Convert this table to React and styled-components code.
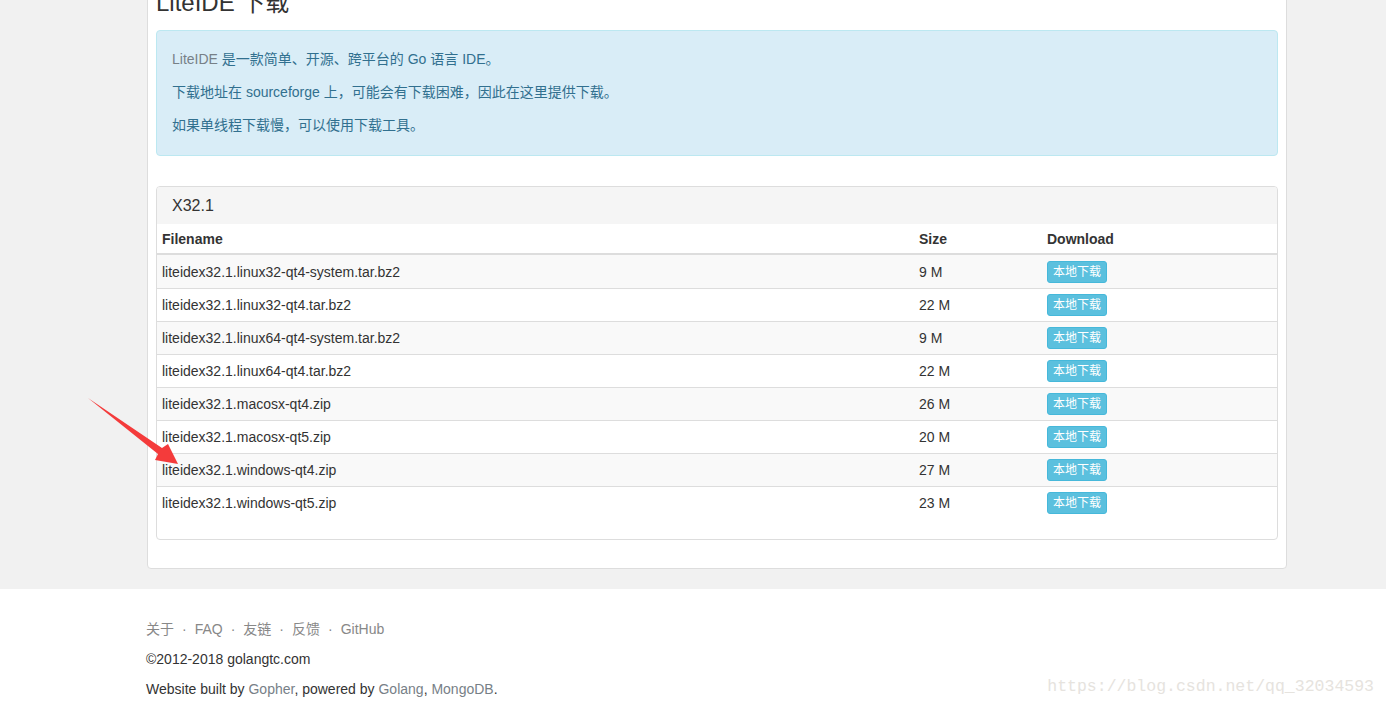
import styled, { createGlobalStyle } from 'styled-components'

const GlobalStyle = createGlobalStyle`
  body {
    margin: 0;
    background: #f1f1f1;
    font-family: "Liberation Sans", Arial, "Noto Sans CJK SC", sans-serif;
    font-size: 14px;
    color: #333;
    overflow: hidden;
  }
`

const Page = styled.div`
  position: relative;
  width: 1386px;
  height: 706px;
  overflow: hidden;
`

const Main = styled.section`
  padding-bottom: 20px;
`

const Box = styled.div`
  width: 1122px;
  margin: -20px 0 0 147px;
  padding: 9px 8px 9px;
  background: #fff;
  border: 1px solid #ddd;
  border-radius: 4px;
`

const Title = styled.h1`
  margin: 0 0 14px;
  font-size: 24px;
  line-height: 26px;
  font-weight: 400;
  color: #333;
`

const Alert = styled.div`
  margin-bottom: 30px;
  padding: 17px 15px 18px;
  background: #d9edf7;
  border: 1px solid #bce8f1;
  border-radius: 4px;
  color: #31708f;

  p {
    margin: 0 0 10px;
    line-height: 23px;
  }
  p:last-child {
    margin-bottom: 0;
  }
`

const Muted = styled.span`
  color: #778087;
`

const Panel = styled.div`
  margin-bottom: 19px;
  border: 1px solid #ddd;
  border-radius: 4px;
  overflow: hidden;
`

const PanelHeading = styled.div`
  padding: 10px 15px;
  background: #f5f5f5;
  font-size: 16px;
  line-height: 17px;
  color: #333;
`

const Table = styled.table`
  width: 1120px;
  margin-bottom: 20px;
  border-collapse: collapse;
  table-layout: fixed;
`

const Th = styled.th`
  padding: 5px 5px 4px;
  line-height: 20px;
  text-align: left;
  font-weight: bold;
  border-bottom: 2px solid #ddd;
`

const Tr = styled.tr`
  background: ${(p) => (p.$striped ? '#f9f9f9' : '#fff')};
`

const Td = styled.td`
  padding: ${(p) => (p.$first ? '6px 5px 5px' : '5px')};
  height: 22px;
  line-height: 22px;
  vertical-align: top;
  border-top: ${(p) => (p.$first ? 'none' : '1px solid #ddd')};
`

const Button = styled.button`
  display: block;
  height: 22px;
  padding: 1px 5px;
  font-family: "Liberation Sans", "Noto Sans CJK SC", sans-serif;
  font-size: 12px;
  line-height: 18px;
  color: #fff;
  background: #5bc0de;
  border: 1px solid #46b8da;
  border-radius: 3px;
  cursor: pointer;
`

const Footer = styled.footer`
  background: #fff;
  padding: 30px 0 0 146px;
  height: 200px;
`

const FooterLine = styled.p`
  margin: 0 0 10px;
  line-height: 20px;
  color: ${(p) => (p.$muted ? '#888' : '#333')};
`

const Dot = styled.span`
  padding: 0 8px;
  color: #888;
`

const Link = styled.a`
  color: #778087;
  text-decoration: none;
`

const Watermark = styled.div`
  position: absolute;
  right: 12px;
  bottom: 10px;
  font-family: "Liberation Mono", "DejaVu Sans Mono", monospace;
  font-size: 16.5px;
  color: #e6e3de;
`

const Arrow = styled.svg`
  position: absolute;
  left: 0;
  top: 0;
  pointer-events: none;
`

const files = [
  ['liteidex32.1.linux32-qt4-system.tar.bz2', '9 M'],
  ['liteidex32.1.linux32-qt4.tar.bz2', '22 M'],
  ['liteidex32.1.linux64-qt4-system.tar.bz2', '9 M'],
  ['liteidex32.1.linux64-qt4.tar.bz2', '22 M'],
  ['liteidex32.1.macosx-qt4.zip', '26 M'],
  ['liteidex32.1.macosx-qt5.zip', '20 M'],
  ['liteidex32.1.windows-qt4.zip', '27 M'],
  ['liteidex32.1.windows-qt5.zip', '23 M'],
]

export default function App() {
  return (
    <Page>
      <GlobalStyle />
      <Main>
        <Box>
          <Title>LiteIDE 下载</Title>
          <Alert>
            <p>
              <Muted>LiteIDE</Muted> 是一款简单、开源、跨平台的 Go 语言 IDE。
            </p>
            <p>下载地址在 sourceforge 上，可能会有下载困难，因此在这里提供下载。</p>
            <p>如果单线程下载慢，可以使用下载工具。</p>
          </Alert>
          <Panel>
            <PanelHeading>X32.1</PanelHeading>
            <Table>
              <colgroup>
                <col style={{ width: 757 }} />
                <col style={{ width: 128 }} />
                <col />
              </colgroup>
              <thead>
                <tr>
                  <Th>Filename</Th>
                  <Th>Size</Th>
                  <Th>Download</Th>
                </tr>
              </thead>
              <tbody>
                {files.map(([name, size], i) => (
                  <Tr key={name} $striped={i % 2 === 0}>
                    <Td $first={i === 0}>{name}</Td>
                    <Td $first={i === 0}>{size}</Td>
                    <Td $first={i === 0}>
                      <Button>本地下载</Button>
                    </Td>
                  </Tr>
                ))}
              </tbody>
            </Table>
          </Panel>
        </Box>
      </Main>
      <Footer>
        <FooterLine $muted>
          关于<Dot>·</Dot>FAQ<Dot>·</Dot>友链<Dot>·</Dot>反馈<Dot>·</Dot>GitHub
        </FooterLine>
        <FooterLine>©2012-2018 golangtc.com</FooterLine>
        <FooterLine>
          Website built by <Link>Gopher</Link>, powered by <Link>Golang</Link>,{' '}
          <Link>MongoDB</Link>.
        </FooterLine>
      </Footer>
      <Watermark>https://blog.csdn.net/qq_32034593</Watermark>
      <Arrow width="200" height="500" viewBox="0 0 200 500">
        <polygon
          points="88,398 162,448 168,444 178,464 155,460 158,454"
          fill="#f43b3b"
        />
      </Arrow>
    </Page>
  )
}
